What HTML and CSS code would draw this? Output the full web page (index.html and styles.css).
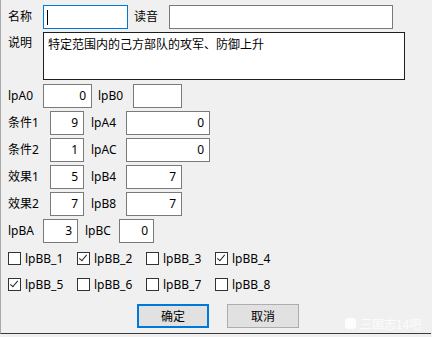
FILE: index.html
```html
<!DOCTYPE html>
<html lang="zh">
<head>
<meta charset="utf-8">
<link rel="stylesheet" href="styles.css">
</head>
<body>
<div class="dlg">
  <div class="row r1">
    <span class="lbl w35">名称</span>
    <div class="box focus w85"><span class="caret"></span></div>
    <span class="lbl w35 ml6">读音</span>
    <div class="box w224"></div>
  </div>
  <div class="row r2">
    <span class="lbl w35 top">说明</span>
    <div class="memo">特定范围内的己方部队的攻军、防御上升</div>
  </div>
  <div class="row rf">
    <span class="lbl w35">lpA0</span>
    <div class="box num w49">0</div>
    <span class="lbl w35 ml6">lpB0</span>
    <div class="box num w49"></div>
  </div>
  <div class="row rf">
    <span class="lbl w42">条件1</span>
    <div class="box num w34">9</div>
    <span class="lbl w35 ml7">lpA4</span>
    <div class="box num w84">0</div>
  </div>
  <div class="row rf">
    <span class="lbl w42">条件2</span>
    <div class="box num w34">1</div>
    <span class="lbl w35 ml7">lpAC</span>
    <div class="box num w84">0</div>
  </div>
  <div class="row rf">
    <span class="lbl w42">效果1</span>
    <div class="box num w34">5</div>
    <span class="lbl w35 ml7">lpB4</span>
    <div class="box num w56">7</div>
  </div>
  <div class="row rf">
    <span class="lbl w42">效果2</span>
    <div class="box num w34">7</div>
    <span class="lbl w35 ml7">lpB8</span>
    <div class="box num w56">7</div>
  </div>
  <div class="row rf">
    <span class="lbl w35">lpBA</span>
    <div class="box num w35">3</div>
    <span class="lbl w34 ml7">lpBC</span>
    <div class="box num w35">0</div>
  </div>
  <div class="row chk c1">
    <div class="cb"><span class="sq"></span><span>lpBB_1</span></div>
    <div class="cb"><span class="sq on"></span><span>lpBB_2</span></div>
    <div class="cb"><span class="sq"></span><span>lpBB_3</span></div>
    <div class="cb"><span class="sq on"></span><span>lpBB_4</span></div>
  </div>
  <div class="row chk c2">
    <div class="cb"><span class="sq on"></span><span>lpBB_5</span></div>
    <div class="cb"><span class="sq"></span><span>lpBB_6</span></div>
    <div class="cb"><span class="sq"></span><span>lpBB_7</span></div>
    <div class="cb"><span class="sq"></span><span>lpBB_8</span></div>
  </div>
  <div class="row btns">
    <div class="btn def">确定</div>
    <div class="btn">取消</div>
  </div>
  <div class="wm"><span class="wmicon"></span>三国志14吧</div>
</div>
</body>
</html>
```
FILE: styles.css
```css
html, body {
  margin: 0;
  padding: 0;
  background: #f0f0f0;
}
body {
  width: 432px;
  height: 337px;
  overflow: hidden;
  font-family: "Noto Sans", "Noto Sans CJK SC", sans-serif;
  font-size: 12px;
  color: #000;
}
.dlg {
  position: relative;
  width: 431px;
  height: 334px;
  border-left: 1px solid #a9a9a9;
  border-bottom: 1px solid #3a3a3a;
  padding: 5px 0 0 7px;
  box-sizing: border-box;
  display: flex;
  flex-direction: column;
}
.row {
  display: flex;
  align-items: center;
  height: 24px;
}
.r2 {
  margin-top: 3px;
  height: 48px;
  align-items: flex-start;
}
.rf {
  margin-top: 3px;
}
.r2 + .rf {
  margin-top: 4px;
}
.lbl {
  flex: none;
  line-height: 24px;
  white-space: nowrap;
}
.lbl.top {
  line-height: 22px;
}
.w34 { width: 34px; }
.w35 { width: 35px; }
.w42 { width: 42px; }
.ml6 { margin-left: 6px; }
.ml7 { margin-left: 7px; }
.box {
  flex: none;
  height: 24px;
  box-sizing: border-box;
  border: 1px solid #7a7a7a;
  background: #fff;
  position: relative;
  line-height: 22px;
}
.box.focus {
  border-color: #0078d7;
}
.box.num {
  text-align: right;
  padding-right: 5px;
}
.caret {
  position: absolute;
  left: 3px;
  top: 4px;
  width: 1px;
  height: 15px;
  background: #000;
}
.w49 { width: 49px; }
.w85 { width: 85px; }
.w224 { width: 224px; }
.w84 { width: 84px; }
.w56 { width: 56px; }
.memo {
  flex: none;
  width: 362px;
  height: 48px;
  box-sizing: border-box;
  border: 1px solid #1e1e1e;
  background: #fff;
  padding: 2px 0 0 4px;
  line-height: 18px;
  font-family: "Noto Sans CJK SC", sans-serif;
}
.chk {
  height: 14px;
}
.c1 {
  margin-top: 8px;
}
.c2 {
  margin-top: 12px;
}
.cb {
  flex: none;
  width: 69px;
  display: flex;
  align-items: center;
  gap: 4px;
}
.sq {
  width: 13px;
  height: 13px;
  box-sizing: border-box;
  border: 1px solid #333;
  background: #fff;
  position: relative;
  flex: none;
}
.sq.on::after {
  content: "";
  position: absolute;
  left: 3px;
  top: 0px;
  width: 3px;
  height: 7px;
  border-right: 1px solid #222;
  border-bottom: 1px solid #222;
  transform: rotate(40deg);
}
.btns {
  margin-top: 13px;
  padding-left: 129px;
  gap: 18px;
}
.btn {
  width: 72px;
  height: 24px;
  box-sizing: border-box;
  border: 1px solid #adadad;
  background: #e1e1e1;
  text-align: center;
  line-height: 22px;
  font-family: "Noto Sans CJK SC", sans-serif;
}
.btn.def {
  border: 2px solid #0078d7;
  line-height: 20px;
}
.wm {
  position: absolute;
  left: 344px;
  top: 315px;
  display: flex;
  align-items: center;
  gap: 4px;
  color: rgba(255, 255, 255, 0.85);
  font-family: "Noto Sans CJK SC", sans-serif;
  font-size: 12px;
}
.wmicon {
  width: 11px;
  height: 11px;
  border-radius: 3px;
  background: rgba(255, 255, 255, 0.85);
}
```
